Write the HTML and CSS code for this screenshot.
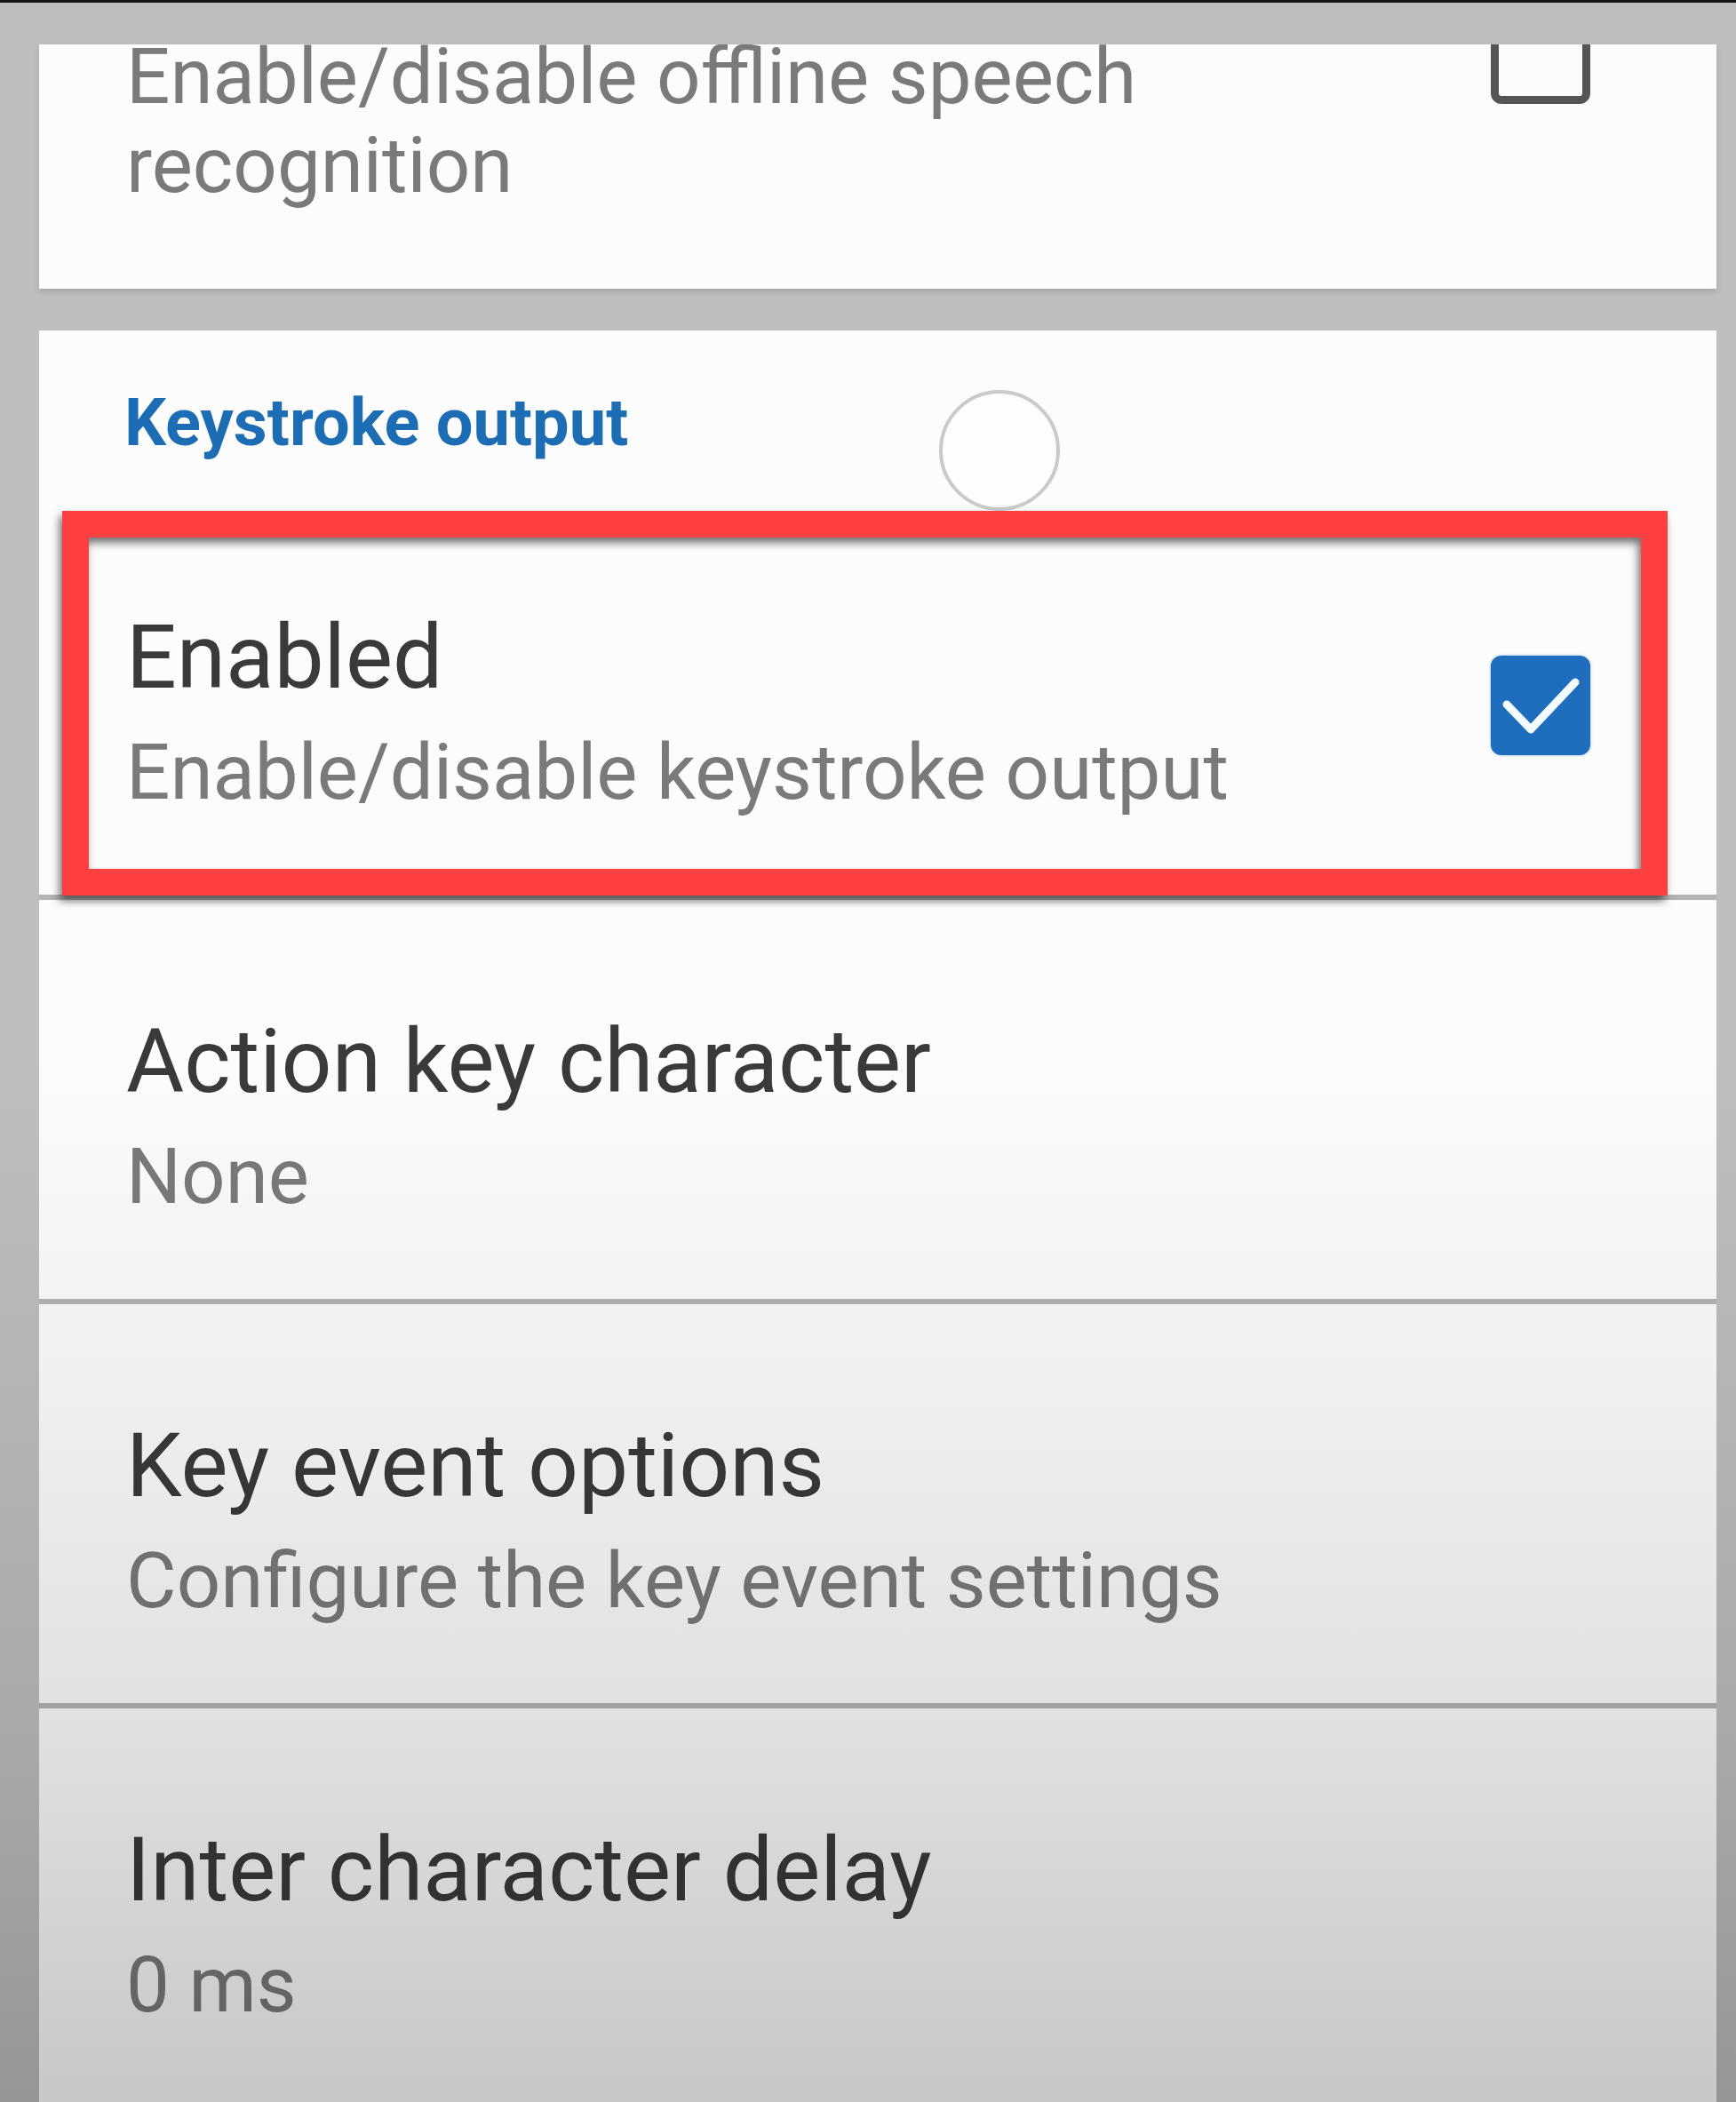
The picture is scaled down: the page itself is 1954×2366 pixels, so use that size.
FILE: index.html
```html
<!DOCTYPE html>
<html lang="en">
<head>
<meta charset="utf-8">
<title>Keystroke output settings</title>
<link rel="stylesheet" href="styles.css">
</head>
<body>
<div class="screen">
  <div class="edge"></div>
  <div class="list">
    <section class="card card-top">
      <div class="pref pref-clipped">
        <div class="pref-text">
          <div class="pref-summary">Enable/disable offline speech recognition</div>
        </div>
        <span class="checkbox checkbox-off"></span>
      </div>
    </section>

    <section class="card card-main">
      <div class="category">Keystroke output</div>
      <span class="touch"></span>

      <div class="pref pref-row">
        <div class="pref-text">
          <div class="pref-title">Enabled</div>
          <div class="pref-summary">Enable/disable keystroke output</div>
        </div>
        <span class="checkbox checkbox-on">
          <svg viewBox="0 0 112 112" width="112" height="112" aria-hidden="true">
            <path d="M18 55 L45 83 L95 30" fill="none" stroke="#f4fbff" stroke-width="9" stroke-linecap="round" stroke-linejoin="round"/>
          </svg>
        </span>
        <span class="highlight"></span>
      </div>

      <div class="pref">
        <div class="pref-text">
          <div class="pref-title">Action key character</div>
          <div class="pref-summary">None</div>
        </div>
      </div>

      <div class="pref">
        <div class="pref-text">
          <div class="pref-title">Key event options</div>
          <div class="pref-summary">Configure the key event settings</div>
        </div>
      </div>

      <div class="pref">
        <div class="pref-text">
          <div class="pref-title">Inter character delay</div>
          <div class="pref-summary">0 ms</div>
        </div>
      </div>
    </section>
  </div>
  <div class="vignette"></div>
</div>
</body>
</html>
```

FILE: styles.css
```css
* { box-sizing: border-box; }

html, body {
  margin: 0;
  padding: 0;
}

body {
  width: 1954px;
  height: 2366px;
  overflow: hidden;
  background: #bdbebd;
  font-family: Roboto, "Noto Sans", "Liberation Sans", sans-serif;
}

.screen {
  position: relative;
  width: 1954px;
  height: 2366px;
  overflow: hidden;
}

.edge {
  height: 3px;
  background: #161616;
}

.list {
  padding: 47px 22px 0 44px;
  display: flex;
  flex-direction: column;
  gap: 47px;
}

.card {
  background: #fcfcfc;
}

.card-top {
  height: 275px;
  overflow: hidden;
  box-shadow: 0 4px 6px rgba(0, 0, 0, 0.12);
}

.card-main {
  position: relative;
  min-height: 2000px;
}

.pref {
  position: relative;
  display: flex;
  align-items: center;
  padding: 122px 142px 86px 98px;
  border-bottom: 6px solid #b3b5b3;
}

.pref-clipped {
  align-items: flex-start;
  padding-top: 0;
  border-bottom: none;
}

.pref-clipped .pref-text {
  margin-top: -14px;
}

.pref-clipped .pref-summary {
  line-height: 100px;
  margin-top: 0;
  width: 1200px;
}

.pref-text {
  flex: 1;
  min-width: 0;
}

.pref-title {
  font-size: 100px;
  line-height: 120px;
  color: #3a3a3a;
  white-space: nowrap;
}

.pref-summary {
  font-size: 87px;
  line-height: 104px;
  margin-top: 17px;
  color: #7a7a7a;
}

.category {
  padding: 61px 92px 39px 96px;
  font-size: 74px;
  line-height: 86px;
  font-weight: 700;
  color: #1d6db4;
}

.checkbox {
  flex: none;
  width: 112px;
  height: 112px;
  border-radius: 12px;
}

.checkbox-off {
  margin-top: -45px;
  border: 9px solid #555555;
  background: transparent;
}

.checkbox-on {
  margin-bottom: 13px;
  background: #1f6ebd;
  box-shadow: 0 0 3px rgba(31, 110, 189, 0.5);
}

.checkbox-on svg {
  display: block;
}

.touch {
  position: absolute;
  left: 1013px;
  top: 67px;
  width: 136px;
  height: 136px;
  border-radius: 50%;
  border: 4px solid #cacaca;
  background: rgba(255, 255, 255, 0.4);
}

.highlight {
  position: absolute;
  left: 26px;
  top: 17px;
  right: 55px;
  bottom: -1px;
  border: 30px solid #fd4040;
  filter: drop-shadow(-3px 6px 5px rgba(0, 0, 0, 0.55));
  pointer-events: none;
}

.vignette {
  position: absolute;
  inset: 0;
  pointer-events: none;
  background: linear-gradient(to bottom,
    rgba(0, 0, 0, 0) 0%,
    rgba(0, 0, 0, 0) 50%,
    rgba(0, 0, 0, 0.05) 66%,
    rgba(0, 0, 0, 0.11) 82%,
    rgba(0, 0, 0, 0.21) 100%);
}
```
